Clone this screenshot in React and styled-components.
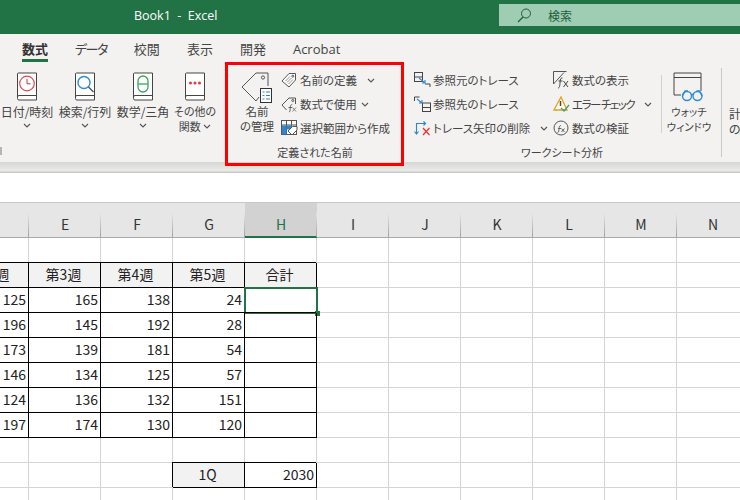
import React from "react";
import styled, { createGlobalStyle } from "styled-components";

const GlobalStyle = createGlobalStyle`
  html, body { margin: 0; padding: 0; background: #fff; }
  body { font-family: "Noto Sans CJK JP", "Liberation Sans", sans-serif; }
`;

const columns = ["D", "E", "F", "G", "H", "I", "J", "K", "L", "M", "N"];

const tableHead = ["第2週", "第3週", "第4週", "第5週", "合計"];
const tableBody = [
  [125, 165, 138, 24],
  [196, 145, 192, 28],
  [173, 139, 181, 54],
  [146, 134, 125, 57],
  [124, 136, 132, 151],
  [197, 174, 130, 120],
];

const tabs = ["数式", "データ", "校閲", "表示", "開発", "Acrobat"];

const ink = "#444";

const Chevron = ({ gap }) => (
  <ChevronMark $gap={gap} width="8" height="5" viewBox="0 0 8 5">
    <path d="M1 1l3 3 3-3" fill="none" stroke="#555" strokeWidth="1.1" />
  </ChevronMark>
);

const BookIcon = ({ children }) => (
  <svg width="22" height="29" viewBox="0 0 22 29">
    <path d="M1.5 25V2a1 1 0 0 1 1-1h18v27H3a1.5 1.5 0 0 1-1.5-1.5V25a1.5 1.5 0 0 1 1.5-1.5h17.5" fill="#fff" stroke="#444" strokeWidth="1" />
    {children}
  </svg>
);

const NameManagerIcon = () => (
  <svg width="33" height="32" viewBox="0 0 33 32">
    <path d="M18 25l-3 4L1 15 15 1h12v13" fill="none" stroke="#555" strokeWidth="1" />
    <circle cx="22" cy="5.5" r="1.6" fill="none" stroke="#555" />
    <rect x="19.5" y="16.5" width="11" height="14" fill="#fff" stroke="#333" />
    <path d="M21.5 20h2M21.5 23.5h2M21.5 27h2M25 20h4M25 23.5h4M25 27h4" stroke="#2e86d0" strokeWidth="1.2" />
  </svg>
);

const DefineIcon = () => (
  <svg width="16" height="16" viewBox="0 0 16 16">
    <path d="M1 9l7-7.5h6.5V8L8 15z" fill="#fff" stroke="#555" />
    <circle cx="11.8" cy="4.2" r="1" fill="none" stroke="#555" />
    <path d="M4.5 9L9 4.500M6 10.500L10.500 6M7.500 12L12 7.500" stroke="#888" strokeWidth=".9" />
  </svg>
);

const UseFormulaIcon = () => (
  <svg width="17" height="17" viewBox="0 0 17 17">
    <path d="M5.500 14L1 9l7-7h6.500v6" fill="none" stroke="#555" />
    <circle cx="11.800" cy="4.500" r="1" fill="none" stroke="#555" />
    <path d="M8 16c1.500 0 1-2.500 1.400-5.500.2-1.500.8-2 1.800-1.800M7.500 11.500h3.500" fill="none" stroke="#555" strokeWidth=".9" />
    <path d="M11.500 11.500l3.500 4M15 11.500l-3.500 4" stroke="#777" strokeWidth=".9" />
  </svg>
);

const FromSelectionIcon = () => (
  <svg width="17" height="16" viewBox="0 0 17 16">
    <rect x=".5" y=".5" width="15" height="14" fill="#fff" stroke="#555" />
    <path d="M.5 5h15M5.500 .5v14M10.500 .5v7" stroke="#555" />
    <rect x="1" y="5.500" width="4.500" height="9" fill="#2e86d0" />
    <rect x="6" y="5.500" width="4.500" height="4" fill="#2e86d0" />
    <path d="M7 11l4.500-4.500H16V10l-5 5z" fill="#fff" stroke="#555" />
  </svg>
);

const PrecedentsIcon = () => (
  <svg width="17" height="16" viewBox="0 0 17 16">
    <rect x=".5" y=".5" width="8" height="9" fill="none" stroke="#444" />
    <path d="M.5 5h8" stroke="#444" />
    <path d="M11 12h5v3" fill="none" stroke="#444" />
    <path d="M5 6l6 5M11 8v3H8" fill="none" stroke="#2e86d0" strokeWidth="1.100" />
  </svg>
);

const DependentsIcon = () => (
  <svg width="17" height="16" viewBox="0 0 17 16">
    <path d="M.5 5V1h5" fill="none" stroke="#444" />
    <rect x="8.500" y="7" width="8" height="8.500" fill="none" stroke="#444" />
    <path d="M8.500 11.500h8" stroke="#444" />
    <path d="M3 3l5 4M8 4v3H5" fill="none" stroke="#2e86d0" strokeWidth="1.100" />
  </svg>
);

const RemoveArrowsIcon = () => (
  <svg width="17" height="16" viewBox="0 0 17 16">
    <path d="M2.500 14V3.500h9M.5 11.500l2 2.500 2-2.500M9.500 1.500l2 2-2 2" fill="none" stroke="#2e86d0" strokeWidth="1.100" />
    <path d="M9 8l6.500 7M15.500 8L9 15" stroke="#e8343a" strokeWidth="1.300" />
  </svg>
);

const ShowFormulasIcon = () => (
  <svg width="17" height="18" viewBox="0 0 17 18">
    <path d="M.5 13V.5h13" fill="none" stroke="#555" />
    <path d="M.5 13L11 1.500" stroke="#555" />
    <path d="M5 17c2 0 1.800-3.500 2.300-8 .2-1.500 1-2.200 2.200-2M5.500 10h4M10.500 10l4.500 6M15 10l-4.500 6" fill="none" stroke="#444" strokeWidth="1" />
  </svg>
);

const ErrorCheckIcon = () => (
  <svg width="17" height="16" viewBox="0 0 17 16">
    <path d="M8 1L1 14h13z" fill="#fff" stroke="#e0a020" strokeWidth="1.300" />
    <path d="M7.500 5v5" stroke="#7a3a10" strokeWidth="1.500" />
    <path d="M8 12l3 3 5-6" fill="none" stroke="#3da35d" strokeWidth="1.300" />
  </svg>
);

const EvaluateIcon = () => (
  <svg width="17" height="16" viewBox="0 0 17 16">
    <circle cx="8" cy="8" r="7" fill="none" stroke="#555" />
    <path d="M4.500 12.500c1.500 0 1.300-2 1.700-5 .2-1.500.8-2 1.800-1.800M5 8.500h3M8.500 8.500l3 3.500M11.500 8.500l-3 3.500" fill="none" stroke="#555" strokeWidth=".9" />
  </svg>
);

const WatchIcon = () => (
  <svg width="32" height="30" viewBox="0 0 32 30">
    <path d="M8 23H1V1h27v18M1 5.500h27" fill="none" stroke="#444" />
    <g fill="none" stroke="#2e8bd8" strokeWidth="1.400">
      <circle cx="14" cy="24" r="4.500" />
      <circle cx="24.500" cy="24" r="4.500" />
      <path d="M18.500 23c1-1 2-1 2 0M9.500 24l2.500-5h3M29 24l-2.500-5h-3" />
    </g>
  </svg>
);

const App = () => (
  <Page>
    <GlobalStyle />
    <TitleBar>
      <DocTitle>Book1&nbsp;&nbsp;-&nbsp;&nbsp;Excel</DocTitle>
      <SearchBox>
        <svg width="15" height="15" viewBox="0 0 15 15">
          <circle cx="9" cy="5.500" r="4.500" fill="none" stroke="#1f5c3a" />
          <path d="M6 9l-5 5" stroke="#1f5c3a" strokeWidth="1.200" />
        </svg>
        <span>検索</span>
      </SearchBox>
    </TitleBar>

    <TabRow>
      {tabs.map((tab, i) => (
        <Tab key={tab} $active={i === 0} $tight={tab === "データ"}>{tab}</Tab>
      ))}
    </TabRow>

    <Ribbon>
      <Group $width={225}>
        <Commands $pad={0}>
          <BigButton $width={54}>
            <IconArea>
              <BookIcon>
                <circle cx="11" cy="11.500" r="7.300" fill="#fff" stroke="#e8474f" strokeWidth="1.200" />
                <path d="M11 7v4.800h3.500" fill="none" stroke="#c0303a" />
              </BookIcon>
            </IconArea>
            <BigLabel>日付/時刻<Chevron /></BigLabel>
          </BigButton>
          <BigButton $width={54}>
            <IconArea>
              <BookIcon>
                <circle cx="10" cy="10.500" r="6" fill="#fff" stroke="#2e8bd8" strokeWidth="1.400" />
                <path d="M14.500 15l5 5" stroke="#555" strokeWidth="1.400" />
              </BookIcon>
            </IconArea>
            <BigLabel>検索/行列<Chevron /></BigLabel>
          </BigButton>
          <BigButton $width={54}>
            <IconArea>
              <BookIcon>
                <rect x="6" y="4" width="10" height="16" rx="5" fill="#fff" stroke="#3da35d" strokeWidth="1.300" />
                <path d="M6 12h10" stroke="#3da35d" strokeWidth="1.300" />
              </BookIcon>
            </IconArea>
            <BigLabel>数学/三角<Chevron /></BigLabel>
          </BigButton>
          <BigButton $width={42}>
            <IconArea>
              <BookIcon>
                <circle cx="6.500" cy="11" r="1.500" fill="#e8343a" />
                <circle cx="11" cy="11" r="1.500" fill="#e8343a" />
                <circle cx="15.500" cy="11" r="1.500" fill="#e8343a" />
              </BookIcon>
            </IconArea>
            <BigLabel $size={11}>その他の<br />関数 <Chevron /></BigLabel>
          </BigButton>
        </Commands>
        <Launcher />
      </Group>

      <Group $width={180}>
        <Commands $pad={12}>
          <BigButton $width={40}>
            <IconArea><NameManagerIcon /></IconArea>
            <BigLabel $size={11.5}>名前<br />の管理</BigLabel>
          </BigButton>
          <Stack>
            <StackRow><IconSlot><DefineIcon /></IconSlot>名前の定義<Chevron gap={10} /></StackRow>
            <StackRow><IconSlot><UseFormulaIcon /></IconSlot>数式で使用<Chevron gap={4} /></StackRow>
            <StackRow><IconSlot><FromSelectionIcon /></IconSlot>選択範囲から作成</StackRow>
          </Stack>
        </Commands>
        <GroupLabel>定義された名前</GroupLabel>
      </Group>

      <Group $width={314}>
        <Commands $pad={9}>
          <Stack $width={139}>
            <StackRow><IconSlot><PrecedentsIcon /></IconSlot>参照元のトレース</StackRow>
            <StackRow><IconSlot><DependentsIcon /></IconSlot>参照先のトレース</StackRow>
            <StackRow><IconSlot><RemoveArrowsIcon /></IconSlot>トレース矢印の削除<Chevron gap={10} /></StackRow>
          </Stack>
          <Stack $width={108}>
            <StackRow><IconSlot><ShowFormulasIcon /></IconSlot>数式の表示</StackRow>
            <StackRow><IconSlot><ErrorCheckIcon /></IconSlot><TightText>エラー チェック</TightText><Chevron gap={10} /></StackRow>
            <StackRow><IconSlot><EvaluateIcon /></IconSlot>数式の検証</StackRow>
          </Stack>
          <ThinRule />
          <BigButton $width={46}>
            <IconArea><WatchIcon /></IconArea>
            <BigLabel $size={10.5}>ウォッチ<br />ウィンドウ</BigLabel>
          </BigButton>
        </Commands>
        <GroupLabel>ワークシート分析</GroupLabel>
      </Group>

      <GroupRule />
      <Clipped>計<br />の</Clipped>
      <RedBox />
    </Ribbon>

    <FormulaBar />

    <Sheet>
      <HeaderRow>
        {columns.map((col) => (
          <ColumnHead key={col} $selected={col === "H"}>{col}</ColumnHead>
        ))}
      </HeaderRow>
      <Row>
        {columns.map((col) => <Cell key={col} />)}
      </Row>
      <Row>
        {columns.map((col, i) => (
          <Cell key={col} $boxed={i < 5} $head={i < 5} $center>{tableHead[i]}</Cell>
        ))}
      </Row>
      {tableBody.map((values, r) => (
        <Row key={r}>
          {columns.map((col, i) => (
            <Cell key={col} $boxed={i < 5}>
              {values[i]}
              {r === 0 && col === "H" && <Selection />}
            </Cell>
          ))}
        </Row>
      ))}
      <Row>
        {columns.map((col) => <Cell key={col} />)}
      </Row>
      <Row>
        {columns.map((col) => (
          <Cell
            key={col}
            $boxed={col === "G" || col === "H"}
            $head={col === "G"}
            $center={col === "G"}
          >
            {col === "G" && "1Q"}
            {col === "H" && 2030}
          </Cell>
        ))}
      </Row>
      <Row>
        {columns.map((col) => <Cell key={col} />)}
      </Row>
    </Sheet>
  </Page>
);

export default App;

const Page = styled.div`
  width: 740px;
  height: 500px;
  overflow: hidden;
  background: #fff;
`;

const TitleBar = styled.div`
  height: 34px;
  background: #217346;
  display: flex;
  align-items: center;
  padding-left: 134px;
`;

const DocTitle = styled.div`
  width: 365px;
  color: #fff;
  font-family: "Open Sans", "Liberation Sans", sans-serif;
  font-size: 12.5px;
  margin-top: -3px;
`;

const SearchBox = styled.div`
  flex: 1;
  height: 22px;
  margin-top: -4px;
  background: #9fcdb3;
  color: #1f5c3a;
  display: flex;
  align-items: center;
  gap: 16px;
  padding-left: 18px;
  font-size: 12px;
`;

const TabRow = styled.div`
  height: 28px;
  background: #f3f2f1;
  display: flex;
  gap: 27px;
  padding-left: 22px;
  font-feature-settings: "palt";
`;

const Tab = styled.div`
  height: 28px;
  box-sizing: border-box;
  padding-top: 6px;
  font-size: 13px;
  line-height: 18px;
  color: ${(p) => (p.$active ? "#333" : "#444")};
  font-weight: ${(p) => (p.$active ? 700 : 400)};
  letter-spacing: ${(p) => (p.$tight ? "-1.5px" : "0")};
  border-bottom: ${(p) => (p.$active ? "3px solid #217346" : "3px solid transparent")};
  font-family: "Open Sans", "Noto Sans CJK JP", sans-serif;
`;

const Ribbon = styled.div`
  position: relative;
  height: 100px;
  background: #f3f2f1;
  display: flex;
  color: ${ink};
  font-size: 12px;
  font-feature-settings: "palt";
`;

const Group = styled.div`
  position: relative;
  width: ${(p) => p.$width}px;
  flex: none;
  display: flex;
  flex-direction: column;
`;

const Commands = styled.div`
  height: 80px;
  padding: 7px 0 0 ${(p) => p.$pad}px;
  display: flex;
  gap: 4px;
`;

const BigButton = styled.div`
  width: ${(p) => p.$width}px;
  flex: none;
  display: flex;
  flex-direction: column;
  align-items: center;
  padding-top: 3px;
`;

const IconArea = styled.div`
  height: 29px;
  display: flex;
  justify-content: center;
`;

const BigLabel = styled.div`
  margin-top: 3px;
  font-size: ${(p) => p.$size || 12}px;
  line-height: 15px;
  text-align: center;
  white-space: nowrap;

  svg { display: block; margin: 4px auto 0; }
  br + svg { display: inline-block; margin: 0 0 2px; }
`;

const ChevronMark = styled.svg`
  display: inline-block;
  flex: none;
  margin-left: ${(p) => p.$gap || 0}px;
`;

const Stack = styled.div`
  width: ${(p) => (p.$width ? `${p.$width}px` : "auto")};
  flex: none;
  margin-top: -1px;
  display: flex;
  flex-direction: column;
  margin-right: -4px;
  font-size: 11.5px;
`;

const StackRow = styled.div`
  height: 24px;
  display: flex;
  align-items: center;
  white-space: nowrap;
  line-height: 24px;
`;

const IconSlot = styled.span`
  width: 19px;
  height: 17px;
  flex: none;
  display: flex;
  align-items: center;
`;

const TightText = styled.span`
  letter-spacing: -1.5px;
`;

const GroupLabel = styled.div`
  text-align: center;
  font-size: 11px;
  line-height: 20px;
`;

const Launcher = styled.div`
  position: absolute;
  left: 0;
  top: 85px;
  width: 2px;
  height: 8px;
  background: #b5b5b5;
`;

const ThinRule = styled.div`
  width: 1px;
  height: 58px;
  margin: 6px 0 0 0;
  background: #d0d0d0;
  flex: none;
`;

const GroupRule = styled.div`
  width: 1px;
  height: 89px;
  margin: 6px 0 0 2px;
  background: #c8c8c8;
  flex: none;
`;

const Clipped = styled.div`
  margin: 44px 0 0 7px;
  line-height: 15px;
  white-space: nowrap;
`;

const RedBox = styled.div`
  position: absolute;
  left: 225px;
  top: 0;
  width: 179px;
  height: 104px;
  box-sizing: border-box;
  border: 3.5px solid #ff0000;
  pointer-events: none;
`;

const FormulaBar = styled.div`
  box-sizing: border-box;
  height: 41px;
  background: linear-gradient(#d6d6d4 0, #ebebea 9px, #c9c9c9 10px, #c9c9c9 11px, #fff 11px);
  border-bottom: 1px solid #c8c8c8;
`;

const Sheet = styled.div`
  margin-left: -43px;
  width: 840px;
  font-family: "Noto Sans CJK JP", "Liberation Sans", sans-serif;
  font-size: 14px;
  color: #222;
`;

const HeaderRow = styled.div`
  display: grid;
  grid-template-columns: repeat(11, 72px);
  height: 35px;
  background: #e6e6e6;
  border-bottom: 1px solid #a8a8a8;
  box-sizing: border-box;
`;

const ColumnHead = styled.div`
  position: relative;
  box-sizing: border-box;
  padding-top: 9px;
  line-height: 24px;
  text-align: center;
  background: ${(p) => (p.$selected ? "#d2d2d2" : "transparent")};
  color: ${(p) => (p.$selected ? "#217346" : "#333")};
  box-shadow: ${(p) => (p.$selected ? "0 1px 0 #217346, inset 0 -1px 0 #217346" : "none")};

  &::after {
    content: "";
    position: absolute;
    right: 0;
    top: 10px;
    bottom: 0;
    width: 1px;
    background: linear-gradient(#e6e6e6, #a0a0a0);
  }
`;

const Row = styled.div`
  display: grid;
  grid-template-columns: repeat(11, 72px);
  height: 25px;
`;

const Cell = styled.div`
  position: relative;
  z-index: ${(p) => (p.$boxed ? 1 : 0)};
  box-sizing: border-box;
  padding-right: 2px;
  line-height: 23px;
  text-align: ${(p) => (p.$center ? "center" : "right")};
  background: ${(p) => (p.$head ? "#f2f2f2" : "transparent")};
  border-right: 1px solid ${(p) => (p.$boxed ? "#000" : "#d4d4d4")};
  border-bottom: 1px solid ${(p) => (p.$boxed ? "#000" : "#d4d4d4")};
  box-shadow: ${(p) => (p.$boxed ? "-1px -1px 0 #000" : "none")};
`;

const Selection = styled.div`
  position: absolute;
  left: -1px;
  top: -1px;
  right: -2px;
  bottom: -2px;
  border: 2px solid #217346;
  z-index: 2;

  &::after {
    content: "";
    position: absolute;
    right: -4px;
    bottom: -4px;
    width: 5px;
    height: 5px;
    background: #217346;
  }
`;
